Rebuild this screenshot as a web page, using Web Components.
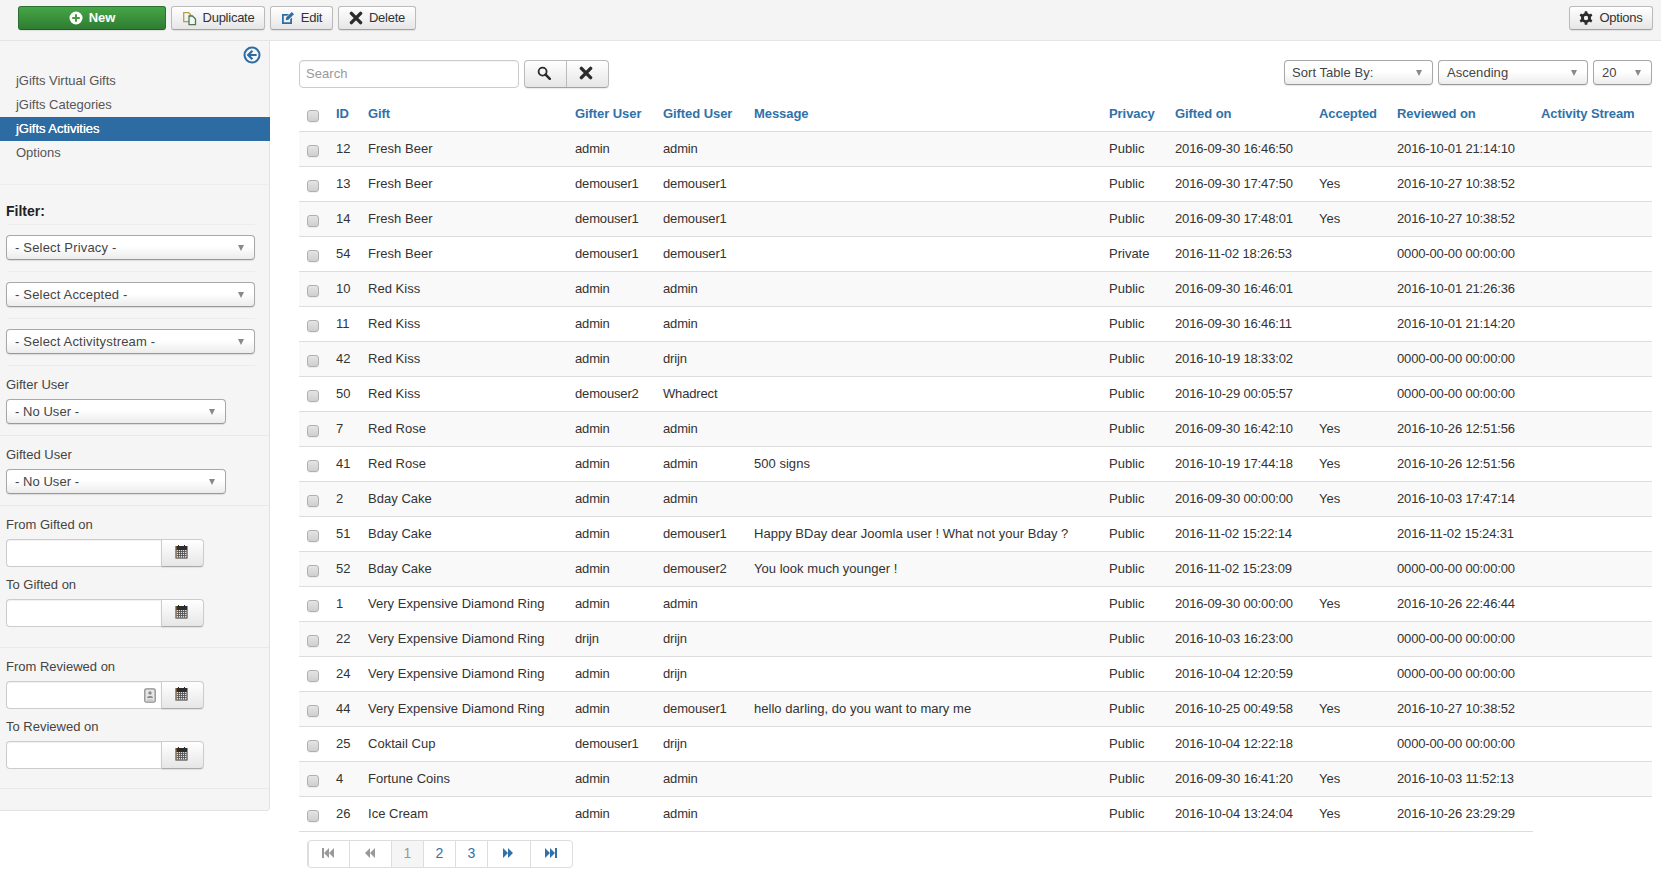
<!DOCTYPE html>
<html lang="en"><head><meta charset="utf-8"><title>jGifts Activities</title>
<style>
html,body{margin:0;background:#fff}
body{font:13px/18px "Liberation Sans",Arial,sans-serif;color:#333}
</style></head>
<body>
<jg-app></jg-app>
<script>
const ICONS={
 plus:'<svg width="14" height="14" viewBox="0 0 14 14"><circle cx="7" cy="7" r="6.5" fill="#fff"/><path d="M7 3.2v7.6M3.2 7h7.6" stroke="#4a9a3f" stroke-width="2"/></svg>',
 copy:'<svg width="15" height="15" viewBox="0 0 15 15" fill="none" stroke-width="1.3"><path d="M1.7 1.7h5l2 2v7h-7z" stroke="#b8a04a"/><path d="M7 5h3.5l3 3v5.7H7z" fill="#f4f4f4" stroke="#4d7a55"/></svg>',
 edit:'<svg width="14" height="14" viewBox="0 0 14 14"><path d="M1 3h7L6.2 4.8H2.8v6.4h6.4V8.2L11 6.4V13H1z" fill="#2f6ea5"/><path d="M5.2 6.6 10.8 1l2.2 2.2-5.6 5.6-2.6.5z" fill="#2f6ea5"/></svg>',
 x:'<svg width="14" height="14" viewBox="0 0 14 14"><path d="M2.4 2.4l9.2 9.2M11.6 2.4l-9.2 9.2" stroke="#2b2b2b" stroke-width="3.4" stroke-linecap="round"/></svg>',
 gear:'<svg width="14" height="14" viewBox="0 0 14 14"><g fill="#2b2b2b"><circle cx="7" cy="7" r="5"/><rect x="5.6" y=".3" width="2.8" height="13.4" rx=".5"/><rect x="5.6" y=".3" width="2.8" height="13.4" rx=".5" transform="rotate(60 7 7)"/><rect x="5.6" y=".3" width="2.8" height="13.4" rx=".5" transform="rotate(120 7 7)"/></g><circle cx="7" cy="7" r="2.2" fill="#f2f2f2"/></svg>',
 search:'<svg width="14" height="14" viewBox="0 0 14 14" fill="none" stroke="#2b2b2b"><circle cx="5.6" cy="5.6" r="4" stroke-width="1.8"/><path d="M8.6 8.6l4.2 4.2" stroke-width="2.6" stroke-linecap="round"/></svg>',
 back:'<svg width="18" height="18" viewBox="0 0 18 18" fill="none" stroke="#2d6ca2"><circle cx="9" cy="9" r="7.5" stroke-width="2"/><path d="M9.4 4.8 5.2 9l4.2 4.2M5.6 9h8" stroke-width="2.2"/></svg>',
 cal:'<svg width="13" height="14" viewBox="0 0 13 14"><path d="M.5 1H3V0h1v1h5V0h1v1h2.5v12.5H.5z" fill="#2c2c2c"/><rect x=".5" y="1" width=".9" height="12.5" fill="#c98a3c"/><rect x="1.6" y="5" width="10" height="7.6" fill="#ddd"/><path d="M1.6 6.5h10M1.6 8.5h10M1.6 10.5h10M3.5 5v7.6M5.5 5v7.6M7.5 5v7.6M9.5 5v7.6" stroke="#555" stroke-width=".9"/></svg>',
 auto:'<svg width="12" height="15" viewBox="0 0 12 15"><rect x=".8" y=".8" width="10.4" height="13.4" rx="1.5" fill="#e6e6e6" stroke="#8d8d8d" stroke-width="1.3"/><circle cx="6" cy="5" r="1.7" fill="#8d8d8d"/><path d="M3 10c0-2.6 6-2.6 6 0z" fill="#8d8d8d"/><path d="M3 12h6" stroke="#b5b5b5"/></svg>',
 first:'<svg width="12" height="10" viewBox="0 0 12 10" fill="#999"><rect x="0" y="0" width="2" height="10"/><path d="M7 0v10L2 5zM12 0v10L7 5z"/></svg>',
 prev:'<svg width="10" height="10" viewBox="0 0 10 10" fill="#999"><path d="M5 0v10L0 5zM10 0v10L5 5z"/></svg>',
 next:'<svg width="10" height="10" viewBox="0 0 10 10" fill="#3071a9"><path d="M0 0v10l5-5zM5 0v10l5-5z"/></svg>',
 last:'<svg width="12" height="10" viewBox="0 0 12 10" fill="#3071a9"><path d="M0 0v10l5-5zM5 0v10l5-5z"/><rect x="10" y="0" width="2" height="10"/></svg>'
};
const BTN_BG='linear-gradient(#fff,#e6e6e6)';
function def(name,css,html,setup){
 customElements.define(name,class extends HTMLElement{
  connectedCallback(){
   if(this.shadowRoot)return;
   const r=this.attachShadow({mode:'open'});
   r.innerHTML='<style>'+css+'</style>'+(typeof html==='function'?html(this):html);
   if(setup)setup(this,r);
  }
 });
}
def('jg-icon',':host{display:inline-flex;align-items:center;justify-content:center;line-height:0}',h=>ICONS[h.getAttribute('name')]);

def('jg-button',`
 :host{display:inline-flex;box-sizing:border-box;height:24px;align-items:center;justify-content:center;gap:6px;
  border:1px solid #bbb;border-bottom-color:#a2a2a2;border-radius:3px;background:${BTN_BG};color:#333;
  box-shadow:0 1px 1px rgba(0,0,0,.08);font-size:13px;letter-spacing:-.25px;white-space:nowrap}
 :host([variant=success]){background:linear-gradient(#46a546,#2f7d32);border-color:#2a7030 #2a7030 #1f5f24;color:#fff;font-weight:bold;letter-spacing:-.1px}
`,h=>`<jg-icon name="${h.getAttribute('icon')}"></jg-icon><slot></slot>`);

def('jg-toolbar',`
 :host{display:flex;box-sizing:border-box;height:41px;padding:6px 8px 0 18px;gap:5px;background:#f4f4f4;border-bottom:1px solid #e4e4e4}
 .sp{flex:1}
`,`<jg-button icon="plus" variant="success" style="width:148px">New</jg-button>
<jg-button icon="copy" style="width:94px">Duplicate</jg-button>
<jg-button icon="edit" style="width:63px">Edit</jg-button>
<jg-button icon="x" style="width:78px">Delete</jg-button>
<span class="sp"></span>
<jg-button icon="gear" style="width:84px">Options</jg-button>`);

def('jg-select',`
 :host{display:flex;box-sizing:border-box;height:25px;align-items:center;padding:0 9px 0 8px;justify-content:space-between;
  border:1px solid #a8a8a8;border-bottom-color:#999;border-radius:4px;background:linear-gradient(#fff 0,#fff 45%,#ececec 100%);
  box-shadow:0 1px 1px rgba(0,0,0,.1);color:#444;font-size:13px;letter-spacing:var(--ls,.18px);white-space:nowrap}
 i{width:0;height:0;border:3.5px solid transparent;border-top:6px solid #888;border-bottom:0;margin-right:1px}
`,`<slot></slot><i></i>`);

def('jg-date',`
 :host{display:flex;box-sizing:border-box;width:198px;height:28px}
 .in{flex:1;display:flex;align-items:center;justify-content:flex-end;padding-right:5px;background:#fff;border:1px solid #ccc;border-right:0;
  border-radius:4px 0 0 4px;box-shadow:inset 0 1px 1px rgba(0,0,0,.06)}
 .bt{width:43px;box-sizing:border-box;display:flex;align-items:center;justify-content:center;padding:0 2px 3px 0;background:${BTN_BG};
  border:1px solid #ccc;border-bottom-color:#aaa;border-radius:0 4px 4px 0;box-shadow:0 1px 1px rgba(0,0,0,.08)}
`,h=>`<div class="in">${h.hasAttribute('auto')?'<jg-icon name="auto"></jg-icon>':''}</div><div class="bt"><jg-icon name="cal"></jg-icon></div>`);

def('jg-nav-item',`
 :host{display:block;height:24px;line-height:24px;padding:0 0 0 16px;color:#555;letter-spacing:-.02px}
 :host([active]){background:#2d6ca2;color:#fff;text-shadow:0 0 0 #fff;margin-right:-1px}
`,`<slot></slot>`);

def('jg-sidebar',`
 :host{display:block;box-sizing:border-box;width:270px;background:#f5f5f5;border-right:1px solid #e3e3e3;border-bottom:1px solid #e3e3e3;border-radius:0 0 4px 0;color:#333;padding-bottom:21px}
 .top{height:28px;display:flex;align-items:center;justify-content:flex-end;padding-right:8px}
 nav{padding-bottom:19px;border-bottom:1px solid #ececec}
 h4{margin:0;padding:17px 0 0 6px;height:22px;font-size:14px;line-height:18px;color:#222}
 .hr{border-bottom:1px solid #ececec;margin:0 14px 0 8px}
 .s{padding:10px 14px 11px 6px}
 .b{padding:10px 0 11px 6px;border-bottom:1px solid #e9e9e9}
 .b.last{padding-bottom:19px}
 .b.d{padding-bottom:20px}
 label{display:block;line-height:18px;margin-bottom:5px;color:#444}
 jg-date+label{margin-top:9px}
 .u{width:220px;--ls:.05px}
`,`<div class="top"><jg-icon name="back"></jg-icon></div>
<nav><jg-nav-item>jGifts Virtual Gifts</jg-nav-item><jg-nav-item>jGifts Categories</jg-nav-item><jg-nav-item active>jGifts Activities</jg-nav-item><jg-nav-item>Options</jg-nav-item></nav>
<h4>Filter:</h4><div class="hr"></div>
<div class="s"><jg-select>- Select Privacy -</jg-select></div><div class="hr"></div>
<div class="s"><jg-select>- Select Accepted -</jg-select></div><div class="hr"></div>
<div class="s"><jg-select>- Select Activitystream -</jg-select></div><div class="hr"></div>
<div class="b" style="border:0;padding-bottom:11px"><label>Gifter User</label><jg-select class="u">- No User -</jg-select></div><div style="border-bottom:1px solid #e9e9e9"></div>
<div class="b"><label>Gifted User</label><jg-select class="u">- No User -</jg-select></div>
<div class="b d"><label>From Gifted on</label><jg-date></jg-date><label>To Gifted on</label><jg-date></jg-date></div>
<div class="b last"><label>From Reviewed on</label><jg-date auto></jg-date><label>To Reviewed on</label><jg-date></jg-date></div>`);

def('jg-search',`
 :host{display:flex;gap:5px;box-sizing:border-box}
 .in{box-sizing:border-box;width:220px;height:28px;border:1px solid #ccc;border-radius:4px;padding:0 6px;line-height:26px;color:#999;background:#fff;box-shadow:inset 0 1px 1px rgba(0,0,0,.05);font-size:13px;letter-spacing:.05px}
 .g{display:flex;height:28px;box-sizing:border-box;border:1px solid #bbb;border-bottom-color:#a2a2a2;border-radius:4px;background:${BTN_BG};box-shadow:0 1px 1px rgba(0,0,0,.08)}
 .g div{width:41px;display:flex;align-items:center;justify-content:center;padding:0 3px 2px 0;box-sizing:border-box}
 .g div+div{border-left:1px solid #bbb;width:42px}
`,`<div class="in">Search</div><div class="g"><div><jg-icon name="search"></jg-icon></div><div><jg-icon name="x"></jg-icon></div></div>`);

def('jg-pagination',`
 :host{display:inline-flex;box-sizing:border-box;height:28px;border:1px solid #ddd;border-radius:4px;background:#fff;color:#3071a9;font-size:14px}
 a{display:flex;box-sizing:border-box;align-items:center;justify-content:center;border-left:1px solid #ddd;padding-bottom:2px}
 a:first-child{border-left:0}
 a.on{background:#f5f5f5;color:#999}
 a.i{padding-right:2px}
`,`<a class="i" style="width:41px"><jg-icon name="first"></jg-icon></a><a class="i" style="width:42px"><jg-icon name="prev"></jg-icon></a><a class="on" style="width:32px">1</a><a style="width:32px">2</a><a style="width:32px">3</a><a class="i" style="width:43px"><jg-icon name="next"></jg-icon></a><a class="i" style="width:42px"><jg-icon name="last"></jg-icon></a>`);

const Z='0000-00-00 00:00:00',R='Very Expensive Diamond Ring',A='admin',D='demouser1',P='Public';
const ROWS=[
[12,'Fresh Beer',A,A,'',P,'2016-09-30 16:46:50','','2016-10-01 21:14:10'],
[13,'Fresh Beer',D,D,'',P,'2016-09-30 17:47:50','Yes','2016-10-27 10:38:52'],
[14,'Fresh Beer',D,D,'',P,'2016-09-30 17:48:01','Yes','2016-10-27 10:38:52'],
[54,'Fresh Beer',D,D,'','Private','2016-11-02 18:26:53','',Z],
[10,'Red Kiss',A,A,'',P,'2016-09-30 16:46:01','','2016-10-01 21:26:36'],
[11,'Red Kiss',A,A,'',P,'2016-09-30 16:46:11','','2016-10-01 21:14:20'],
[42,'Red Kiss',A,'drijn','',P,'2016-10-19 18:33:02','',Z],
[50,'Red Kiss','demouser2','Whadrect','',P,'2016-10-29 00:05:57','',Z],
[7,'Red Rose',A,A,'',P,'2016-09-30 16:42:10','Yes','2016-10-26 12:51:56'],
[41,'Red Rose',A,A,'500 signs',P,'2016-10-19 17:44:18','Yes','2016-10-26 12:51:56'],
[2,'Bday Cake',A,A,'',P,'2016-09-30 00:00:00','Yes','2016-10-03 17:47:14'],
[51,'Bday Cake',A,D,'Happy BDay dear Joomla user ! What not your Bday ?',P,'2016-11-02 15:22:14','','2016-11-02 15:24:31'],
[52,'Bday Cake',A,'demouser2','You look much younger !',P,'2016-11-02 15:23:09','',Z],
[1,R,A,A,'',P,'2016-09-30 00:00:00','Yes','2016-10-26 22:46:44'],
[22,R,'drijn','drijn','',P,'2016-10-03 16:23:00','',Z],
[24,R,A,'drijn','',P,'2016-10-04 12:20:59','',Z],
[44,R,A,D,'hello darling, do you want to mary me',P,'2016-10-25 00:49:58','Yes','2016-10-27 10:38:52'],
[25,'Coktail Cup',D,'drijn','',P,'2016-10-04 12:22:18','',Z],
[4,'Fortune Coins',A,A,'',P,'2016-09-30 16:41:20','Yes','2016-10-03 11:52:13'],
[26,'Ice Cream',A,A,'',P,'2016-10-04 13:24:04','Yes','2016-10-26 23:29:29']];
const WIDTHS=[29,32,207,88,91,355,66,144,78,144,119];
const HEAD=['ID','Gift','Gifter User','Gifted User','Message','Privacy','Gifted on','Accepted','Reviewed on','Activity Stream'];
const CB='<span class="cb"></span>';
def('jg-table',`
 :host{display:block}
 table{border-collapse:separate;border-spacing:0;table-layout:fixed;width:1353px;font-size:13px}
 th,td{padding:8px 8px 8px;line-height:18px;text-align:left;vertical-align:top;white-space:nowrap;border-top:1px solid #ddd}
 thead th{border-top:0;color:#3071a9;font-weight:bold;padding:10px 8px 8px;letter-spacing:-.07px}
 tbody tr:nth-child(odd){background:#f9f9f9}
 td.g{letter-spacing:.03px}
 td.u{letter-spacing:-.15px}
 td.t{letter-spacing:-.15px}
 .cb{display:block;box-sizing:border-box;width:12px;height:12px;margin-top:5px;border:1px solid #b0b0b0;border-radius:3px;background:linear-gradient(#e4e4e4,#cfcfcf);box-shadow:0 1px 0 rgba(0,0,0,.05)}
 tfoot td{padding:8px 8px 0}
 tfoot td.e{border:0}
`,`<table><colgroup>${WIDTHS.map(w=>`<col style="width:${w}px">`).join('')}</colgroup>
<thead><tr><th>${CB}</th>${HEAD.map(h=>`<th>${h}</th>`).join('')}</tr></thead>
<tbody>${ROWS.map(r=>`<tr><td>${CB}</td><td>${r[0]}</td><td class="g">${r[1]}</td><td class="u">${r[2]}</td><td class="u">${r[3]}</td><td class="g">${r[4]}</td><td>${r[5]}</td><td class="t">${r[6]}</td><td>${r[7]}</td><td class="t">${r[8]}</td><td></td></tr>`).join('')}</tbody>
<tfoot><tr><td colspan="10"><jg-pagination></jg-pagination></td><td class="e"></td></tr></tfoot></table>`);

def('jg-filters',`
 :host{display:flex;align-items:flex-start;justify-content:space-between;height:35px}
 .r{display:flex;gap:5px;--ls:.05px}
`,`<jg-search></jg-search><div class="r"><jg-select style="width:149px;padding-left:7px">Sort Table By:</jg-select><jg-select style="width:150px">Ascending</jg-select><jg-select style="width:59px">20</jg-select></div>`);

def('jg-app',`
 :host{display:block}
 .row{display:flex;align-items:flex-start}
 main{flex:1;padding:19px 9px 0 29px;min-width:0}
`,`<jg-toolbar></jg-toolbar><div class="row"><jg-sidebar></jg-sidebar><main><jg-filters></jg-filters><jg-table></jg-table></main></div>`);
</script>
</body></html>
